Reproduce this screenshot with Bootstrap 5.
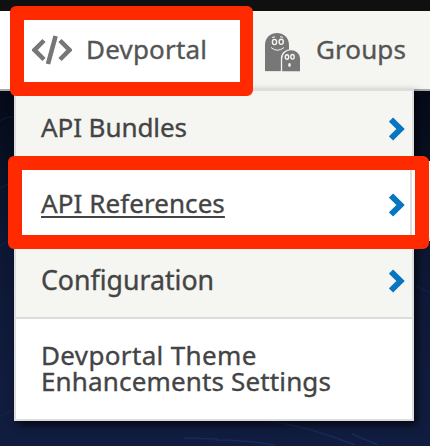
<!DOCTYPE html>
<html lang="en">
<head>
<meta charset="utf-8">
<meta name="viewport" content="width=device-width, initial-scale=1">
<title>Devportal</title>
<link href="https://cdn.jsdelivr.net/npm/bootstrap@5.3.0/dist/css/bootstrap.min.css" rel="stylesheet">
<style>
body{height:446px;font-family:"Noto Sans","Open Sans",sans-serif;font-size:26px;line-height:26px;color:#444;-webkit-text-stroke:.35px;background:linear-gradient(#050a18 90px,#080f20 150px,#0d1733 245px,#101b3c 350px,#111d40)}
.scene{z-index:-1}
.topstrip{height:11px;background:#101010}
.mainbar{height:80px;background:#f5f5f1;border-bottom:2px solid #a9aaab;color:#555}
.tab-dev{width:244px;padding-left:16px;background:#fff}
.tab-groups{padding-left:21px}
.tab-groups svg{margin-top:4px}
.tab-dev span{margin:-2px 0 0 14px;letter-spacing:.2px}
.tab-groups span{margin:-2px 0 0 16px;letter-spacing:.1px}
.panel{width:400px;height:332px;margin:-2px 0 0 14px;border:2px solid #dcdddc;background:#f5f5f1;box-shadow:3px 4px 8px rgba(0,0,0,.7)}
.entry{height:76px;padding:2px 7px 0 25px;border-bottom:2px solid #dcdddc;color:#444;text-decoration:none}
.entry span{margin-top:-4px}
.entry.active-row{background:#fff}
.entry.active-row span{letter-spacing:.07px;text-decoration:underline;text-decoration-thickness:2px;text-underline-offset:3px}
.entry .snug{letter-spacing:-.08px}
.entry .broad{margin-top:-2px;font-size:26.7px}
.entry .line-a{margin-top:-2px;letter-spacing:.35px}
.entry .line-b{margin-top:0;letter-spacing:.15px}
.entry.last{height:100px;padding-top:0;background:#fff;border-bottom:0}
.frame{border:14px solid #ff2a00;border-radius:6px;pointer-events:none}
.frame-a{left:10px;top:6px;width:243px;height:90px;border-right-width:13px}
.frame-b{left:8px;top:156px;width:421px;height:93px}
.flyout{left:412px;top:161px;width:18px;height:80px;background:#fff;border-bottom:3px solid #dcdddc}
.seam{left:410px;top:170px;width:2px;height:66px;background:#dcdddc}
.seam::after{content:"";position:absolute;left:2px;width:3px;height:66px;background:#fff}
</style>
<script src="https://cdn.jsdelivr.net/npm/bootstrap@5.3.0/dist/js/bootstrap.bundle.min.js"></script>
</head>
<body class="position-relative overflow-hidden">
<svg class="scene position-absolute top-0 start-0" width="430" height="446" fill="none" stroke="#25386f" stroke-width="1.5" opacity=".45">
<path opacity=".5" d="M0 121Q8 116 14 117M0 188Q7 184 14 183M0 246Q7 240 14 240M0 417Q9 410 20 409M415 285L430 293"/><path d="M184 438L218 439M215 440Q245 440 275 445M270 421Q310 427 355 445M352 434L378 445"/>
</svg>
<div class="topstrip"></div>
<nav class="mainbar d-flex">
  <a class="tab-dev d-flex align-items-center text-reset text-decoration-none" href="#">
    <svg class="ms-3" width="40" height="30" viewBox="0 0 40 30" fill="none" stroke="#777" stroke-width="4.6"><path d="M12 5.5L2.6 15L12 24.5M28 5.5L37.4 15L28 24.5M23.6 1L16 29"/></svg>
    <span>Devportal</span>
  </a>
  <a class="tab-groups d-flex align-items-center text-reset text-decoration-none" href="#">
    <svg width="35" height="39" viewBox="0 0 35 39"><path fill="#777" d="M0 38.5V12C0-4 24-4 24 12V38.5Z"/><path fill="#777" stroke="#f5f5f1" stroke-width="1.3" d="M16.5 40V26C16.5 13.5 35.7 13.5 35.7 26V40Z"/><path fill="#f5f5f1" d="M0 38.2H35V39H0Z"/><g fill="#777" stroke="#f5f5f1" stroke-width="1.4"><ellipse cx="9.5" cy="9" rx="2.1" ry="2.6"/><ellipse cx="16.2" cy="8.8" rx="2.1" ry="2.6"/><ellipse cx="22" cy="24" rx="1.7" ry="2.3"/><ellipse cx="27.5" cy="23.8" rx="1.7" ry="2.3"/></g><path fill="none" stroke="#f5f5f1" d="M6 14.5Q12.5 20 19 14.5M7 4.5l3-.7M15 3.7l3 .6"/><ellipse cx="24.5" cy="32" rx="1.3" ry="1.9" fill="#f5f5f1"/></svg>
    <span>Groups</span>
  </a>
</nav>
<div class="flyout position-absolute"></div>
<div class="panel position-relative d-flex flex-column">
  <a class="entry d-flex align-items-center justify-content-between" href="#"><span class="snug">API Bundles</span><svg width="16" height="24" viewBox="0 0 16 24" fill="none" stroke="#0875c1" stroke-width="6"><path d="M2 2.5L11.5 12L2 21.5"/></svg></a>
  <a class="entry active-row d-flex align-items-center justify-content-between" href="#"><span>API References</span><svg width="16" height="24" viewBox="0 0 16 24" fill="none" stroke="#0875c1" stroke-width="6"><path d="M2 2.5L11.5 12L2 21.5"/></svg></a>
  <a class="entry d-flex align-items-center justify-content-between" href="#"><span class="broad">Configuration</span><svg width="16" height="24" viewBox="0 0 16 24" fill="none" stroke="#0875c1" stroke-width="6"><path d="M2 2.5L11.5 12L2 21.5"/></svg></a>
  <a class="entry last d-flex flex-column justify-content-center" href="#"><span class="line-a">Devportal Theme</span><span class="line-b">Enhancements Settings</span></a>
</div>
<div class="seam position-absolute"></div>
<div class="frame frame-a position-absolute"></div>
<div class="frame frame-b position-absolute"></div>
</body>
</html>
